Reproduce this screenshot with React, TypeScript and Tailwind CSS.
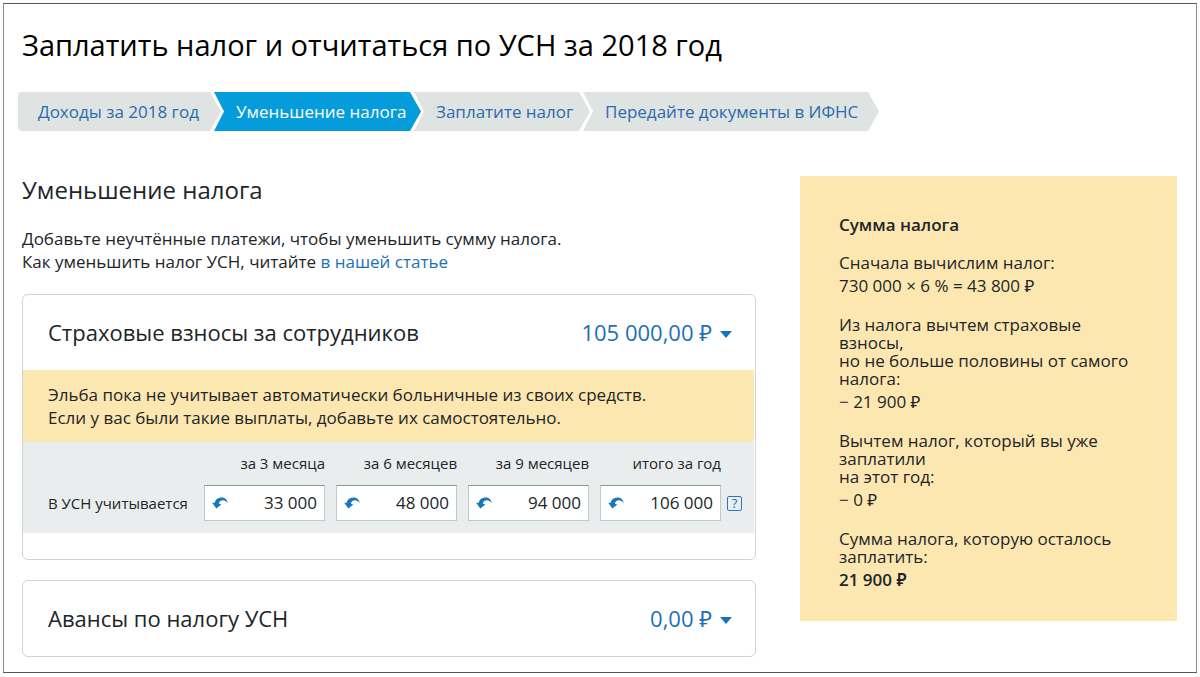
import clsx from "clsx";

const steps = [
  { title: "Доходы за 2018 год", shape: "w-[203px] pl-5 rounded-l [clip-path:polygon(0_0,calc(100%-11px)_0,100%_50%,calc(100%-11px)_100%,0_100%)]" },
  { title: "Уменьшение налога", active: true, shape: "w-[207px] pl-[22px]" },
  { title: "Заплатите налог", shape: "w-[176px] pl-[22px]" },
  { title: "Передайте документы в ИФНС", shape: "w-[296px] pl-[22px]" },
];

const periods = [
  { id: "q1", label: "за 3 месяца", value: "33 000" },
  { id: "q2", label: "за 6 месяцев", value: "48 000" },
  { id: "q3", label: "за 9 месяцев", value: "94 000" },
  { id: "year", label: "итого за год", value: "106 000" },
];

const calculation = [
  { lines: ["Сначала вычислим налог:"], result: "730 000 × 6 % = 43 800 ₽" },
  {
    lines: ["Из налога вычтем страховые взносы,", "но не больше половины от самого налога:"],
    result: "− 21 900 ₽",
  },
  { lines: ["Вычтем налог, который вы уже заплатили", "на этот год:"], result: "− 0 ₽" },
  { lines: ["Сумма налога, которую осталось заплатить:"], result: "21 900 ₽", total: true },
];

const UndoIcon = () => (
  <svg viewBox="0 0 16 12" className="w-4 h-3" aria-hidden="true">
    <path
      d="M15.8 6.2C15.2 2 12.4.2 9.2.4 5.7.6 3.2 2.6 2.6 5.7L.2 5.7 4.3 11.6 9.4 7.5 6.8 6.8C7 5 8.2 3.6 10.1 3.4 12.3 3.2 14.2 4.1 15.8 6.2Z"
      fill="#1777bb"
    />
  </svg>
);

const Caret = () => (
  <svg viewBox="0 0 12 7" className="w-3 h-[7px] mt-1" aria-hidden="true">
    <path d="M0 0h12L6 7z" fill="#1573bb" />
  </svg>
);

const Steps = () => (
  <nav aria-label="Шаги" className="flex ml-[14px]">
    {steps.map((step, i) => (
      <a
        key={step.title}
        href="#"
        aria-current={step.active ? "step" : undefined}
        className={clsx(
          "flex items-center shrink-0 h-[39px] text-[17px] whitespace-nowrap",
          i > 0 &&
            "-ml-[7px] [clip-path:polygon(0_0,calc(100%-11px)_0,100%_50%,calc(100%-11px)_100%,0_100%,10px_50%)]",
          step.active ? "bg-[#049cda] text-white" : "bg-[#dfe3e2] text-[#2a6cae]",
          step.shape
        )}
      >
        {step.title}
      </a>
    ))}
  </nav>
);

const CardHeader = ({ title, amount }: { title: string; amount: string }) => (
  <div className="flex items-center justify-between h-[75px] pl-[25px] pr-[23px]">
    <h3 className="text-[22px]">{title}</h3>
    <button type="button" className="flex items-center gap-2 text-[22px] text-[#1d6fb7]">
      {amount}
      <Caret />
    </button>
  </div>
);

const PeriodField = ({ id, label, value }: { id: string; label: string; value: string }) => (
  <div className="flex flex-col w-[121px]">
    <label htmlFor={id} className="h-[21px] mb-[11px] text-[15px] leading-[21px] text-right whitespace-nowrap">
      {label}
    </label>
    <div className="flex items-center h-9 px-[7px] bg-white border border-[#c3c8ca] border-t-[#8e9496]">
      <button type="button" aria-label="Вернуть значение">
        <UndoIcon />
      </button>
      <input id={id} defaultValue={value} className="flex-1 min-w-0 bg-transparent text-[17px] text-right outline-none" />
    </div>
  </div>
);

const Summary = () => (
  <aside className="w-[377px] shrink-0 self-start bg-[#fde7b0] px-[39px] pt-9 pb-7 text-[17px]">
    <h2 className="leading-[25px] font-semibold">Сумма налога</h2>
    {calculation.map((item) => (
      <div key={item.result} className="mt-[17px]">
        {item.lines.map((line) => (
          <p key={line} className="leading-[18px]">
            {line}
          </p>
        ))}
        <p className={clsx("leading-[27px]", item.total && "font-semibold")}>{item.result}</p>
      </div>
    ))}
  </aside>
);

export default function App() {
  return (
    <div className="bg-white p-[3px] pb-1 font-['Open_Sans','Noto_Sans',sans-serif] text-[#212529]">
      <main className="border border-[#8c8c8c] border-y-[#555] pb-[15px]">
        <h1 className="pl-[18px] pt-[22px] mb-7 text-[29px] leading-[38px] text-black">
          Заплатить налог и отчитаться по УСН за 2018 год
        </h1>
        <Steps />

        <div className="flex gap-11 mt-[45px] pl-[18px] pr-[19px]">
          <div className="flex-1 min-w-0">
            <h2 className="text-2xl leading-7">Уменьшение налога</h2>
            <p className="mt-[23px] text-[17px] leading-[23px]">
              Добавьте неучтённые платежи, чтобы уменьшить сумму налога.
              <br />
              Как уменьшить налог УСН, читайте{" "}
              <a href="#" className="text-[#1d6fb7]">
                в нашей статье
              </a>
            </p>

            <section className="mt-[21px] border border-[#cfd5d7] rounded-md">
              <CardHeader title="Страховые взносы за сотрудников" amount="105 000,00 ₽" />
              <p className="mr-px pl-[25px] py-[13px] bg-[#fde7b0] text-[17px] leading-[23px]">
                Эльба пока не учитывает автоматически больничные из своих средств.
                <br />
                Если у вас были такие выплаты, добавьте их самостоятельно.
              </p>
              <div className="flex items-end justify-between mr-px mb-[26px] pl-[25px] pr-3 pt-[11px] pb-3 bg-[#e9edee]">
                <span className="h-9 text-[15px] leading-9">В УСН учитывается</span>
                <div className="flex items-end gap-[11px]">
                  {periods.map((period) => (
                    <PeriodField key={period.id} {...period} />
                  ))}
                  <button
                    type="button"
                    aria-label="Справка"
                    className="flex items-center justify-center size-[15px] -ml-[5px] mb-2.5 border border-[#2b76b9] rounded-xs text-[13px] text-[#1d6fb7]"
                  >
                    ?
                  </button>
                </div>
              </div>
            </section>

            <section className="mt-5 border border-[#cfd5d7] rounded-md">
              <CardHeader title="Авансы по налогу УСН" amount="0,00 ₽" />
            </section>
          </div>
          <Summary />
        </div>
      </main>
    </div>
  );
}
